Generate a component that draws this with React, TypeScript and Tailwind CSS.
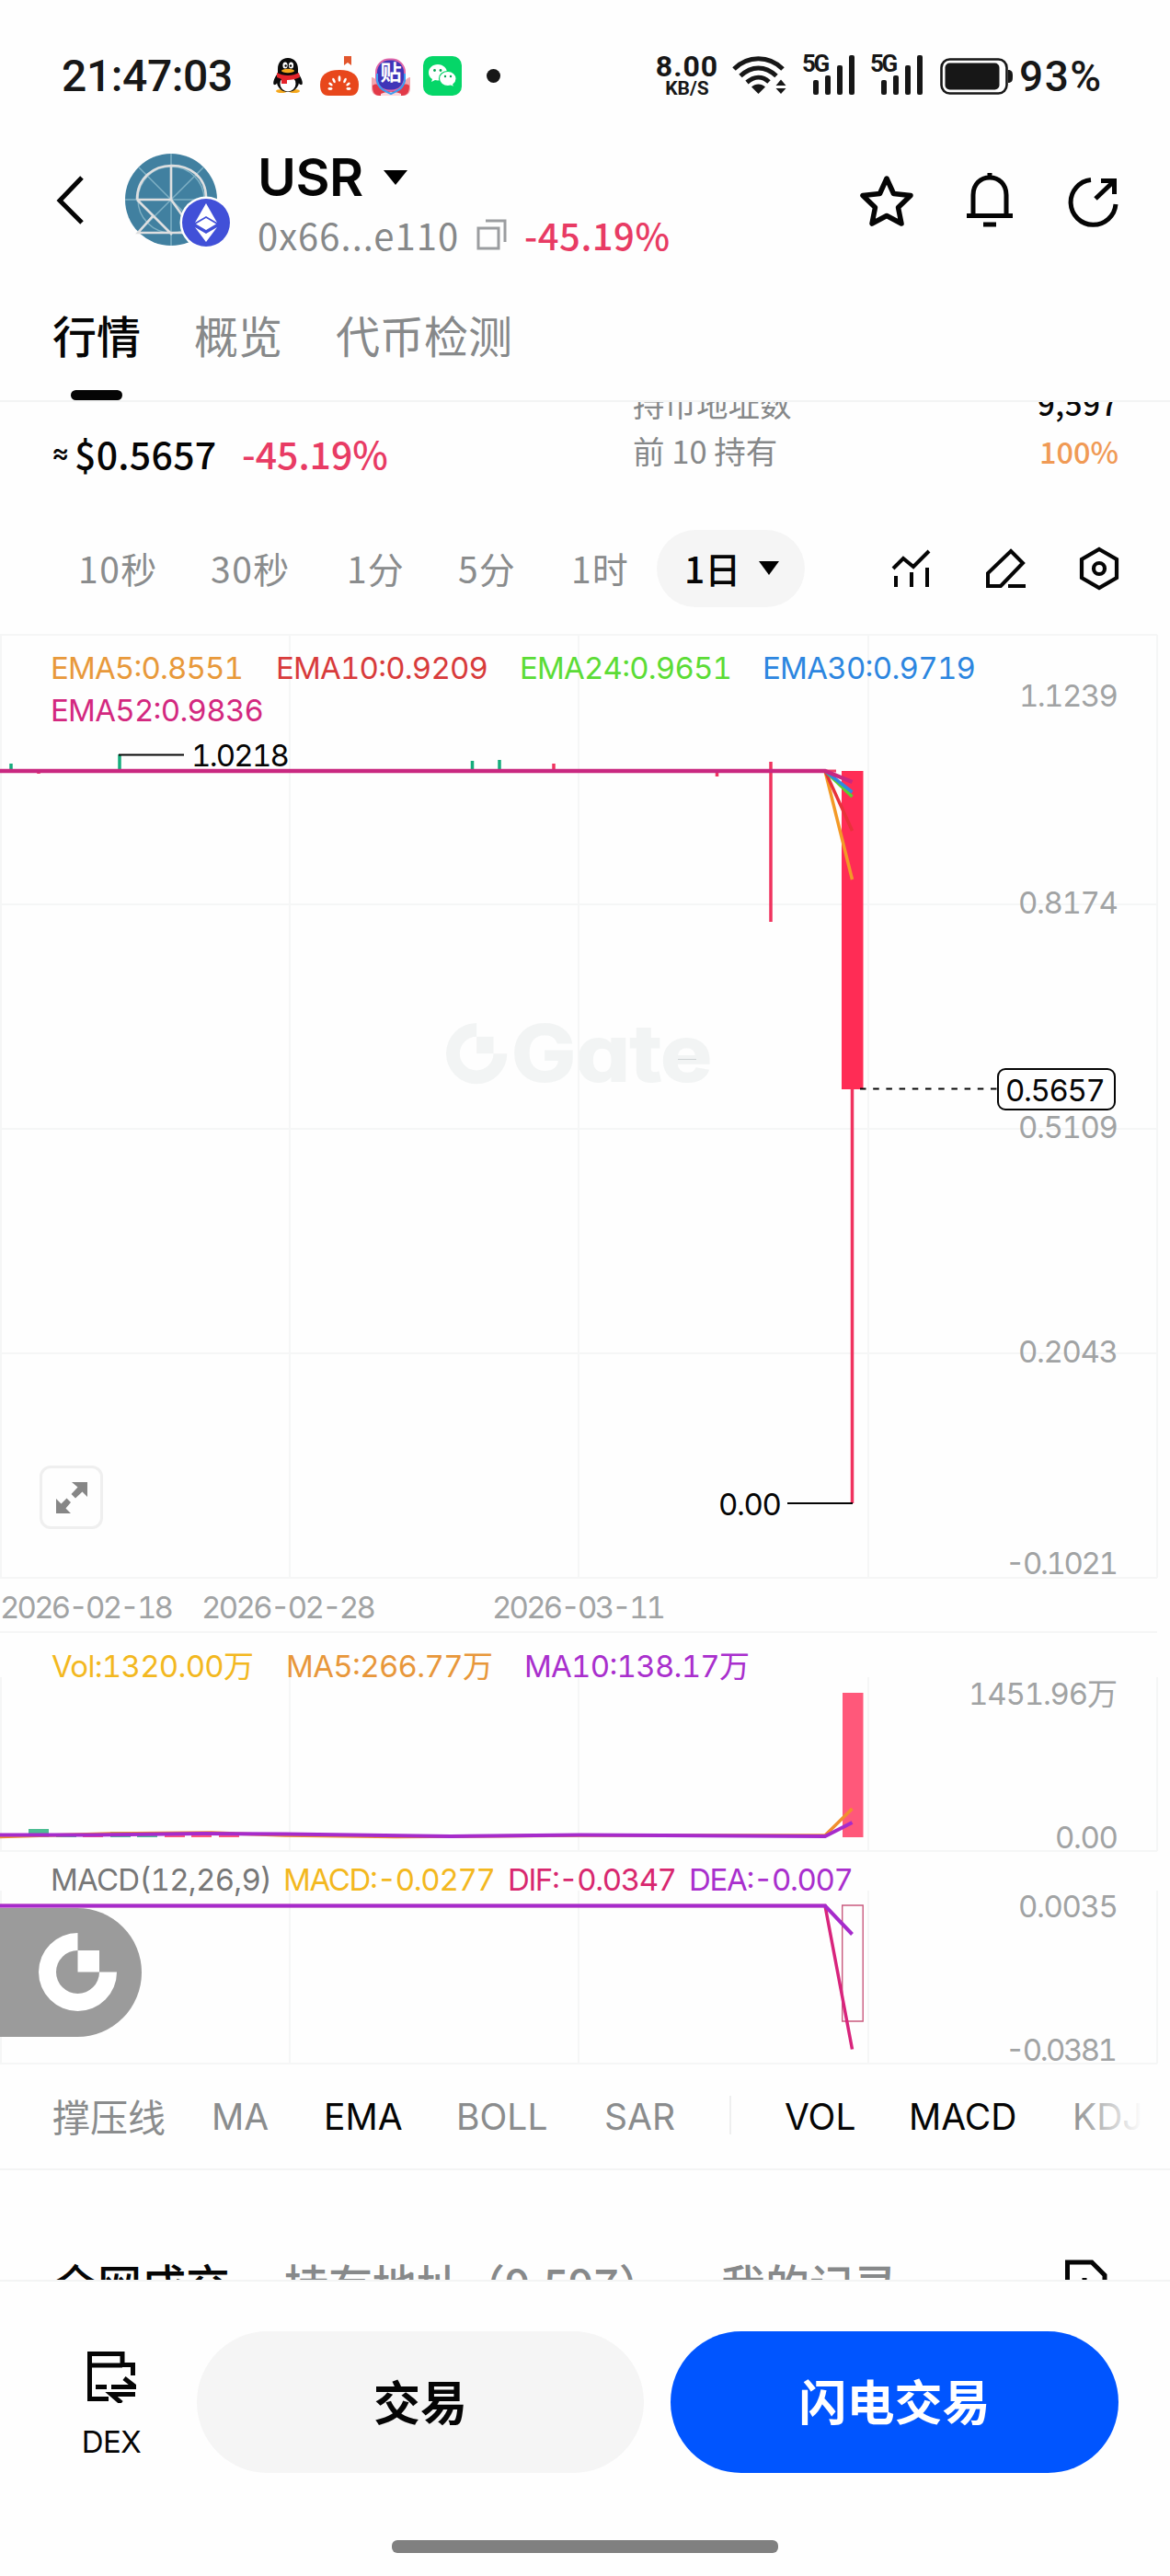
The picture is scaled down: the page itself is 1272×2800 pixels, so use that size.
import type { ReactNode } from 'react'

const FLOW = '#ff2c55'

/* ---------- status bar ---------- */

function Penguin() {
  return (
    <svg width="32" height="38" viewBox="0 0 32 38">
      <ellipse cx="9" cy="36" rx="6" ry="2" fill="#f5a81c" />
      <ellipse cx="23" cy="36" rx="6" ry="2" fill="#f5a81c" />
      <path d="M4 18C1 22-1 28 1 29s4-3 4-3ZM28 18c3 4 5 10 3 11s-4-3-4-3Z" fill="#0b0b0b" />
      <path d="M16 0C9 0 5 5 5 12v4C3 20 3 24 4 27c1 6 6 10 12 10s11-4 12-10c1-3 1-7-1-11v-4C27 5 23 0 16 0Z" fill="#0b0b0b" />
      <ellipse cx="16" cy="28" rx="8.5" ry="8.5" fill="#fff" />
      <ellipse cx="13" cy="8" rx="2.6" ry="3.6" fill="#fff" />
      <ellipse cx="19.5" cy="8" rx="2.6" ry="3.6" fill="#fff" />
      <circle cx="13.6" cy="8.5" r="1.2" />
      <circle cx="19" cy="8.5" r="1.2" />
      <ellipse cx="16" cy="14" rx="7" ry="2.2" fill="#f5a81c" />
      <path d="M4 16c7 4 17 4 24 0l1 5c-4 2-9 3-14 3v4H9v-5l-5-2Z" fill="#e5242b" />
    </svg>
  )
}

function Tomato() {
  return (
    <svg width="42" height="44" viewBox="0 0 42 44">
      <path d="M26 1h8v10l-4-3-4 3Z" fill="#e2562d" />
      <path d="M21 16c14 0 21 6 21 16 0 8-3 12-9 12H9c-6 0-9-4-9-12 0-10 7-16 21-16Z" fill="#e8471c" />
      <g fill="#fff">
        <ellipse cx="21" cy="25.500" rx="1.400" ry="3.200" />
        <ellipse cx="15" cy="27.500" rx="1.400" ry="3" transform="rotate(-25 15 27.500)" />
        <ellipse cx="27" cy="27.500" rx="1.400" ry="3" transform="rotate(25 27 27.500)" />
        <ellipse cx="11.500" cy="31.500" rx="1.400" ry="2.600" transform="rotate(-52 11.500 31.500)" />
        <ellipse cx="30.500" cy="31.500" rx="1.400" ry="2.600" transform="rotate(52 30.500 31.500)" />
        <ellipse cx="11" cy="36.500" rx="2.600" ry="1.400" />
        <ellipse cx="31" cy="36.500" rx="2.600" ry="1.400" />
      </g>
    </svg>
  )
}

function Tieba() {
  return (
    <div className="relative flex h-[44px] w-[42px] justify-center">
      <svg className="absolute left-0 top-0" width="42" height="44" viewBox="0 0 42 44">
        <path d="M0 24c4 0 4 4 8 4h26c4 0 4-4 8-4v12c0 5-3 8-8 8H8c-5 0-8-3-8-8Z" fill="#f3a6ae" />
        <path d="M1 33c4-3 9-1 11 3 3 4 15 4 18 0 2-4 7-6 11-3 0 7-2 11-8 11H9c-6 0-8-4-8-11Z" fill="#e23a48" />
        <path d="M10 42c7-3 15-3 22 0v2H10Z" fill="#fbd5da" />
        <rect x="5" y="4.500" width="31" height="34" rx="14" fill="#3f35b8" stroke="#e066a8" strokeWidth="2" />
        <path d="M6 20v8c2 8 6 10 15 14 9-4 13-6 15-14v-8" fill="none" stroke="#3d9df0" strokeWidth="2" />
      </svg>
      <span className="relative mt-[7px] text-[23px] font-bold leading-[26px] text-white">贴</span>
    </div>
  )
}

function WeChat() {
  return (
    <svg width="42" height="43" viewBox="0 0 42 43">
      <rect width="42" height="43" rx="10" fill="#05d668" />
      <path d="M16 9c-6 0-10 4-10 9 0 3 1.500 5.500 4 7l-1 3 4-2c1 .4 2 .4 3 .4 6 0 10-4 10-8.500S22 9 16 9Z" fill="#fff" />
      <path d="M27 16.500c-5.500 0-9.500 3.500-9.500 8s4 8 9.500 8l3-.4 3.500 1.600-.7-3c2-1.500 3.300-3.700 3.300-6.200 0-4.500-4-8-9.100-8Z" fill="#fff" stroke="#05d668" strokeWidth="1.200" />
      <g fill="#05a653">
        <circle cx="12.500" cy="15.500" r="1.400" />
        <circle cx="19" cy="15.500" r="1.400" />
        <circle cx="24" cy="22" r="1.200" />
        <circle cx="30" cy="22" r="1.200" />
      </g>
    </svg>
  )
}

function Wifi() {
  return (
    <svg width="60" height="43" viewBox="0 0 60 43" fill="none" stroke="#171717" strokeWidth="5">
      <path d="M2 15C17 0 40 0 55 15M9 22.500C21 11 36 11 48 22.500M16 29.500C24 22.500 33 22.500 40 29" />
      <path d="M28.500 42 21 34.500c4-4 11-4 15 0Z" fill="#171717" stroke="none" />
      <path d="M53 26.500 58.500 33h-11ZM53 42l-5.500-6h11Z" fill="#171717" stroke="none" />
    </svg>
  )
}

function Signal() {
  return (
    <div className="relative h-[43px] w-[58px]">
      <span className="absolute left-0 top-0 text-[26px] font-bold leading-[19px] tracking-[-2.5px] text-[#171717]">5G</span>
      <div className="flex h-full items-end justify-end gap-[7px] pr-px">
        <i className="h-[16px] w-[6px] rounded-[2px] bg-[#171717]" />
        <i className="h-[21px] w-[6px] rounded-[2px] bg-[#171717]" />
        <i className="h-[32px] w-[6px] rounded-[2px] bg-[#171717]" />
        <i className="h-[43px] w-[6px] rounded-[2px] bg-[#171717]" />
      </div>
    </div>
  )
}

function StatusBar() {
  return (
    <div className="flex h-[161px] items-start pt-[60px] font-['Roboto','Noto_Sans_CJK_SC',sans-serif] text-[#171717]">
      <span className="ml-[67px] w-[230px] text-[48px] font-medium leading-[46px] tracking-[-0.4px]">21:47:03</span>
      <div className="mt-[3px] w-[51px]"><Penguin /></div>
      <div className="w-[56px]"><Tomato /></div>
      <div className="w-[56px]"><Tieba /></div>
      <div className="mt-px w-[42px]"><WeChat /></div>
      <i className="ml-[27px] mt-[15px] size-[15px] rounded-full bg-[#171717]" />
      <div className="ml-[167px] flex w-[72px] flex-col items-center font-bold">
        <span className="text-[32px] leading-[24px] tracking-[1px]">8.00</span>
        <span className="mt-[3px] text-[21px] leading-[18px]">KB/S</span>
      </div>
      <div className="ml-[13px] w-[76px]"><Wifi /></div>
      <div className="w-[74px]"><Signal /></div>
      <div className="w-[76px]"><Signal /></div>
      <svg className="mt-[3px]" width="80" height="40" viewBox="0 0 80 40">
        <rect x="1.500" y="1.500" width="71" height="37" rx="9" fill="none" stroke="#171717" strokeWidth="2.600" />
        <rect x="5.500" y="5.500" width="59" height="29" rx="5" fill="#171717" />
        <path d="M74 13c4 0 5 2 5 7s-1 7-5 7Z" fill="#171717" />
      </svg>
      <span className="ml-[6px] text-[46px] font-medium leading-[47px] tracking-[1.5px]">93%</span>
    </div>
  )
}

/* ---------- header ---------- */

function TokenAvatar() {
  return (
    <svg width="116" height="110" viewBox="0 0 116 110" fill="none">
      <circle cx="51" cy="54" r="50" fill="#4180a0" />
      <g stroke="#7fb0c4" strokeWidth="1.500">
        <path d="M51 4v100M1 54h100M16 19l70 70M86 19 16 89" />
        <circle cx="51" cy="54" r="36" />
      </g>
      <path d="M51 17v37M14 54h37l27 38M14 54c0-49 75-49 75-2M14 54l38 38M31 72 15 90h60" stroke="#dedfe0" strokeWidth="2.600" />
      <circle cx="89" cy="79" r="28.500" fill="#fefefe" />
      <circle cx="89" cy="79" r="26" fill="#4150d8" />
      <path d="m89 58 12 21-12-7-12 7ZM89 74l11 6.500L89 87l-11-6.500ZM77 84l12 7 12-7-12 16Z" fill="#fff" />
    </svg>
  )
}

function Header() {
  return (
    <div className="flex h-[128px] items-start">
      <svg className="ml-[60px] mt-[29px]" width="32" height="55" viewBox="0 0 32 55">
        <path d="M29 3 5 28l24 24" fill="none" stroke="#050505" strokeWidth="5" />
      </svg>
      <div className="ml-[43px] mt-[2px]"><TokenAvatar /></div>
      <div className="ml-[29px] w-[641px]">
        <div className="flex h-[64px] items-center">
          <span className="font-['Inter',sans-serif] text-[57px] font-semibold leading-[64px] tracking-[-0.5px]">USR</span>
          <svg className="ml-[22px]" width="26" height="16" viewBox="0 0 26 16"><path d="M0 0h26L13 16Z" /></svg>
        </div>
        <div className="-mt-[2px] flex h-[64px] items-center text-[40px] leading-[64px]">
          <span className="w-[238px] tracking-[1px] text-[#868889]">0x66...e110</span>
          <svg width="34" height="34" viewBox="0 0 34 34" fill="none" stroke="#9b9da0" strokeWidth="3">
            <path d="M2 10h22v22H2ZM10 2h21v23" />
          </svg>
          <span className="ml-[18px] font-medium tracking-[0.5px] text-[#e83b64]">-45.19%</span>
        </div>
      </div>
      <svg className="ml-[12px] mt-[27px]" width="62" height="60" viewBox="0 0 62 60">
        <path d="m31 6 7.500 16.500 18.500 2-13.500 13L47 55 31 46.500 15 55l3.500-17.500L5 24.500l18.500-2Z" fill="none" stroke="#050505" strokeWidth="5.500" strokeLinejoin="round" />
      </svg>
      <svg className="ml-[55px] mt-[26px]" width="52" height="62" viewBox="0 0 52 62" fill="none" stroke="#050505" strokeWidth="5">
        <path d="M26 1v6M8 47V25c0-12 8-19 18-19s18 7 18 19v22M1 47.500h50M19 57h14" />
      </svg>
      <svg className="ml-[58px] mt-[28px]" width="56" height="58" viewBox="0 0 56 58" fill="none" stroke="#050505" strokeWidth="5">
        <path d="M26 6.500A24.500 24.500 0 1 0 53 33M37 7.500h14.500V22M51 8 31 27" />
      </svg>
    </div>
  )
}

function Tabs() {
  return (
    <div className="flex h-[148px] gap-[58px] border-b-2 border-[#f3f4f4] pl-[57px] text-[48px] leading-[148px] text-[#87898a]">
      <div className="relative font-medium text-[#050505]">
        <span className="relative">行情</span>
        <i className="absolute bottom-0 left-[20px] h-[11px] w-[56px] rounded-full bg-[#050505]" />
      </div>
      <span>概览</span>
      <span>代币检测</span>
    </div>
  )
}

function TokenInfo() {
  return (
    <div className="flex h-[139px] items-start justify-between px-[56px]">
      <div className="mt-[25px] flex text-[41px] font-medium leading-[60px]">
        <span className="w-[25px] font-['Inter',sans-serif] text-[29px]">≈</span>
        <span className="w-[182px] tracking-[0.3px]">$0.5657</span>
        <span className="text-[#e83b64]">-45.19%</span>
      </div>
      <div className="-mt-[24px] w-[528px] text-[34.500px] leading-[51px]">
        <div className="flex justify-between">
          <span className="text-[#868889]">持币地址数</span>
          <span className="text-[33px] font-medium tracking-[0.6px]">9,597</span>
        </div>
        <div className="flex justify-between">
          <span className="text-[#868889]">前 10 持有</span>
          <span className="text-[32.500px] font-medium text-[#f09a55]">100%</span>
        </div>
      </div>
    </div>
  )
}

function Timeframes() {
  return (
    <div className="flex h-[84px] items-center text-[39px] leading-[80px] text-[#8a8c8d]">
      <span className="-mt-[3px] ml-[85px] w-[144px] tracking-[1.5px]">10秒</span>
      <span className="-mt-[3px] w-[148px] tracking-[1.5px]">30秒</span>
      <span className="-mt-[3px] w-[121px] tracking-[1px]">1分</span>
      <span className="-mt-[3px] w-[123px] tracking-[1px]">5分</span>
      <span className="-mt-[3px] w-[93px] tracking-[1px]">1时</span>
      <div className="flex h-[84px] w-[161px] items-center rounded-full bg-[#f5f5f5] pb-[2px] pl-[30px] font-medium text-[#050505]">
        1日
        <svg className="ml-[20px]" width="22" height="15" viewBox="0 0 22 15"><path d="M0 0h22L11 15Z" /></svg>
      </div>
      <svg className="ml-[94px]" width="44" height="44" viewBox="0 0 44 44" fill="none" stroke="#050505" strokeWidth="4">
        <path d="M2 22 13 11l11 9L41 3M5 30v12M22 26v16M39 21v21" />
      </svg>
      <svg className="ml-[57px]" width="46" height="44" viewBox="0 0 46 44" fill="none" stroke="#050505" strokeWidth="4">
        <path d="M29 3 42 16 18 41H4V27ZM26 41h19" />
      </svg>
      <svg className="ml-[57px]" width="44" height="48" viewBox="0 0 44 48" fill="none" stroke="#050505" strokeWidth="4.200">
        <path d="M22 3 41 14v20L22 45 3 34V14Z" />
        <circle cx="22" cy="24" r="6" />
      </svg>
    </div>
  )
}

/* ---------- charts ---------- */

type LabelProps = { x: number; y: number; w: number; fill?: string; children: ReactNode }

// x is the left edge, w the drawn width
function Label({ x, y, w, fill = '#a1a3a4', children }: LabelProps) {
  return (
    <text x={x} y={y} textLength={w} fill={fill} fontSize="33">{children}</text>
  )
}

function GateMark({ color }: { color: string }) {
  return (
    <>
      <path d="M42.500 0A42.500 42.500 0 1 0 85 42.500H66A23.500 23.500 0 1 1 42.500 19Z" fill={color} />
      <path d="M42.500 19H66v23.500H42.500Z" fill={color} />
    </>
  )
}

function Charts() {
  return (
    <div className="relative mt-[29px] h-[1555px]">
      <svg className="block font-['Inter','Noto_Sans_CJK_SC',sans-serif] tabular-nums" width="1272" height="1555" viewBox="0 689 1272 1555">
        {/* watermark */}
        <g transform="translate(485 1112) scale(0.780)"><GateMark color="#f2f4f4" /></g>
        <text
          x="556"
          y="1175"
          textLength="218"
          lengthAdjust="spacingAndGlyphs"
          fontSize="84"
          fill="#f2f4f4"
          stroke="#f2f4f4"
          strokeWidth="2"
          className="font-bold [font-feature-settings:'cv11']"
        >
          Gate
        </text>
        <path d="M737 1151.500h20" stroke="#cfd3d4" />

        {/* grid */}
        <g stroke="#f5f6f6" strokeWidth="2">
          <path d="M0 690h1258M0 983h1258M0 1227h1258M0 1471h1258M0 1715h1258M0 1774h1258M0 2012h1258M0 2243h1258" />
          <path d="M1 690v1025M315 690v1025M629 690v1025M944 690v1025M1258 690v1025" />
          <path d="M1 1823v189M315 1823v189M629 1823v189M944 1823v189M1258 1823v189" />
          <path d="M1 2055v188M315 2055v188M629 2055v188M944 2055v188M1258 2055v188" />
        </g>

        {/* price */}
        <g strokeWidth="3.500">
          <path d="M12 830v8M130 820v18M513.500 827v11M543 826v12" stroke="#16ad7c" />
          <path d="M602 830v8M779.500 838v6M838 828v174M926.500 838v796M42 838v3" stroke="#f0335f" />
        </g>
        <path d="M915 838h23.500v346H915Z" fill={FLOW} />
        <path d="M0 838h909" stroke="#ee4068" strokeWidth="3" />
        <g fill="none" strokeWidth="3.500">
          <path d="m897 838 29.500 118" stroke="#f39a27" />
          <path d="m897 838 29.500 65" stroke="#e8323a" />
          <path d="m897 838 29.500 28" stroke="#5ccf2f" />
          <path d="m897 838 29.500 23" stroke="#2f8ae0" />
          <path d="M0 838h897l29.500 12" stroke="#c92880" strokeWidth="4.500" />
        </g>
        <path d="M129 820.500h71M856 1634h71" stroke="#050505" strokeWidth="2.200" />
        <path d="M935 1183.500h149" stroke="#050505" strokeWidth="2" strokeDasharray="6.500 7.700" />

        <Label x={55} y={738} w={210} fill="#e8993a">EMA5:0.8551</Label>
        <Label x={300} y={738} w={231} fill="#d83b3b">EMA10:0.9209</Label>
        <Label x={565} y={738} w={231} fill="#5bdc35">EMA24:0.9651</Label>
        <Label x={829} y={738} w={232} fill="#2c86e0">EMA30:0.9719</Label>
        <Label x={55} y={784} w={232} fill="#d3287f">EMA52:0.9836</Label>

        <Label x={208} y={833} w={107} fill="#050505">1.0218</Label>
        <Label x={781} y={1647} w={69} fill="#050505">0.00</Label>

        <Label x={1108} y={768} w={108}>1.1239</Label>
        <Label x={1107} y={993} w={109}>0.8174</Label>
        <Label x={1107} y={1237} w={109}>0.5109</Label>
        <Label x={1107} y={1481} w={109}>0.2043</Label>
        <Label x={1093} y={1711} w={123}>-0.1021</Label>

        <rect x="1085" y="1162" width="127" height="44" rx="8" fill="#fefefe" stroke="#050505" strokeWidth="2" />
        <Label x={1093} y={1196.500} w={109} fill="#050505">0.5657</Label>

        <Label x={0} y={1759} w={189}>2026-02-18</Label>
        <Label x={219} y={1759} w={190}>2026-02-28</Label>
        <Label x={535} y={1759} w={189}>2026-03-11</Label>

        {/* volume */}
        <g fill="#4dbd93">
          <path d="M31 1988h22v9H31ZM61 1994h22v3H61ZM120 1991h22v6h-22ZM149 1994h22v3h-22Z" />
        </g>
        <path d="M90 1995h22v2H90ZM179 1991h22v6h-22ZM208 1994h22v3h-22ZM238 1994h22v3h-22Z" fill="#ff587a" />
        <path d="M916 1840h22.500v157H916Z" fill="#ff587a" />
        <g fill="none" strokeWidth="3.500">
          <path d="M0 1996.500 120 1993l110-1 80 3 120 1.500 200-1.500h267l29.500-29" stroke="#f08f2e" />
          <path d="M0 1994.500h100l120-1.500 90 .5 180 2.500 140-1.500 267 1.500 29.500-15" stroke="#a62bcb" strokeWidth="4" />
        </g>
        <Label x={56} y={1823} w={220} fill="#f3b81f">Vol:1320.00万</Label>
        <Label x={311} y={1823} w={225} fill="#e8973a">MA5:266.77万</Label>
        <Label x={570} y={1823} w={245} fill="#a92fcd">MA10:138.17万</Label>
        <Label x={1053} y={1853} w={162}>1451.96万</Label>
        <Label x={1147} y={2009} w={69}>0.00</Label>

        {/* macd */}
        <path d="M915.700 2071h22.500v126h-22.500Z" fill="none" stroke="#c95a7e" strokeWidth="1.400" />
        <g fill="none" strokeWidth="3.500">
          <path d="M0 2071.500h897l29.500 156" stroke="#d8247c" />
          <path d="M0 2071.500h897l29.500 31" stroke="#a62bcb" strokeWidth="4" />
        </g>
        <Label x={55} y={2055} w={241} fill="#777777">MACD(12,26,9)</Label>
        <Label x={308} y={2055} w={231} fill="#f3b81f">MACD:-0.0277</Label>
        <Label x={552} y={2055} w={184} fill="#d8286f">DIF:-0.0347</Label>
        <Label x={749} y={2055} w={179} fill="#a92fcd">DEA:-0.007</Label>
        <Label x={1107} y={2084} w={109}>0.0035</Label>
        <Label x={1093} y={2240} w={122}>-0.0381</Label>
      </svg>

      <button className="absolute left-[43px] top-[904px] flex size-[69px] items-center justify-center rounded-[12px] border-[3px] border-[#efefef] bg-[#fefefe]">
        <svg width="34" height="34" viewBox="0 0 34 34" fill="#868686">
          <path d="M17 0h17v16l-5.500-5.500-7.500 7-4.500-4.500 7-7.500ZM0 34V18l5.500 5.500 6-6L16 22l-5.500 6.500L16 34Z" />
        </svg>
      </button>
      <div className="absolute left-0 top-[1385px] h-[140px] w-[154px] rounded-r-full bg-[#9b9b9b]">
        <svg className="ml-[42px] mt-[27px]" width="85" height="85" viewBox="0 0 85 85"><GateMark color="#fff" /></svg>
      </div>
    </div>
  )
}

function Indicators() {
  return (
    <div className="relative flex h-[115px] items-center border-b-2 border-[#f3f4f4] pb-[3px] font-['Inter','Noto_Sans_CJK_SC',sans-serif] text-[39px] leading-[60px] text-[#8a8c8d]">
      <span className="ml-[57px] mt-[5px] w-[173px] text-[41px]">撑压线</span>
      <span className="mt-[3px] w-[122px]">MA</span>
      <span className="mt-[3px] w-[144px] text-[#050505]">EMA</span>
      <span className="mt-[3px] w-[161px]">BOLL</span>
      <span className="mt-[3px] w-[136px]">SAR</span>
      <i className="h-[42px] w-[2px] bg-[#eeefef]" />
      <span className="ml-[58px] mt-[3px] w-[135px] text-[#050505]">VOL</span>
      <span className="mt-[3px] w-[178px] text-[#050505]">MACD</span>
      <span className="mt-[3px]">KDJ</span>
      <i className="absolute right-[30px] top-0 h-[110px] w-[78px] bg-linear-to-r from-[#fefefe]/0 to-[#fefefe]" />
    </div>
  )
}

function RecordTabs() {
  return (
    <div className="flex h-[119px] items-start overflow-hidden pt-[82px] text-[48px] font-medium leading-[80px] text-[#87898a]">
      <span className="ml-[58px] w-[251px] text-[#050505]">全网成交</span>
      <span className="w-[475px] whitespace-nowrap">持有地址（9,597）</span>
      <span className="w-[373px]">我的记录</span>
      <svg className="mt-[14px] shrink-0" width="48" height="56" viewBox="0 0 48 56" fill="none" stroke="#050505" strokeWidth="5">
        <path d="M3.500 53V4H30l14 14v35ZM22 21v20" />
      </svg>
    </div>
  )
}

function BottomBar() {
  return (
    <div className="h-[322px] border-t-2 border-[#f3f4f4] bg-[#fefefe] pt-[54px]">
      <div className="flex items-start">
        <div className="ml-[56px] flex w-[130px] flex-col items-center pt-[20px]">
          <svg width="54" height="58" viewBox="0 0 54 58" fill="none" stroke="#050505" strokeWidth="5">
            <path d="M24 53.500H3.500V4.500H39v12h11.500V28M3.500 17H39M10 40.500h12M27 40.500h26L41 31M53 48.500H27L38 58" />
          </svg>
          <span className="mt-[22px] font-['Inter',sans-serif] text-[33px] leading-[40px] tracking-[-0.5px]">DEX</span>
        </div>
        <button className="ml-[28px] h-[154px] w-[486px] rounded-full bg-[#f5f5f5] pb-[4px] text-[51px] font-bold">交易</button>
        <button className="ml-[29px] h-[154px] w-[487px] rounded-full bg-[#0055ff] pb-[4px] text-[52px] font-bold text-white">闪电交易</button>
      </div>
      <div className="mx-auto mt-[73px] h-[14px] w-[420px] rounded-[6px] bg-[#808080]" />
    </div>
  )
}

export default function App() {
  return (
    <div className="h-[2800px] w-[1272px] overflow-hidden bg-[#fefefe] font-['Noto_Sans_CJK_SC','Inter',sans-serif] text-[#050505]">
      <StatusBar />
      <Header />
      <Tabs />
      <div className="h-[2041px] overflow-hidden">
        <TokenInfo />
        <Timeframes />
        <Charts />
        <Indicators />
        <RecordTabs />
      </div>
      <BottomBar />
    </div>
  )
}
